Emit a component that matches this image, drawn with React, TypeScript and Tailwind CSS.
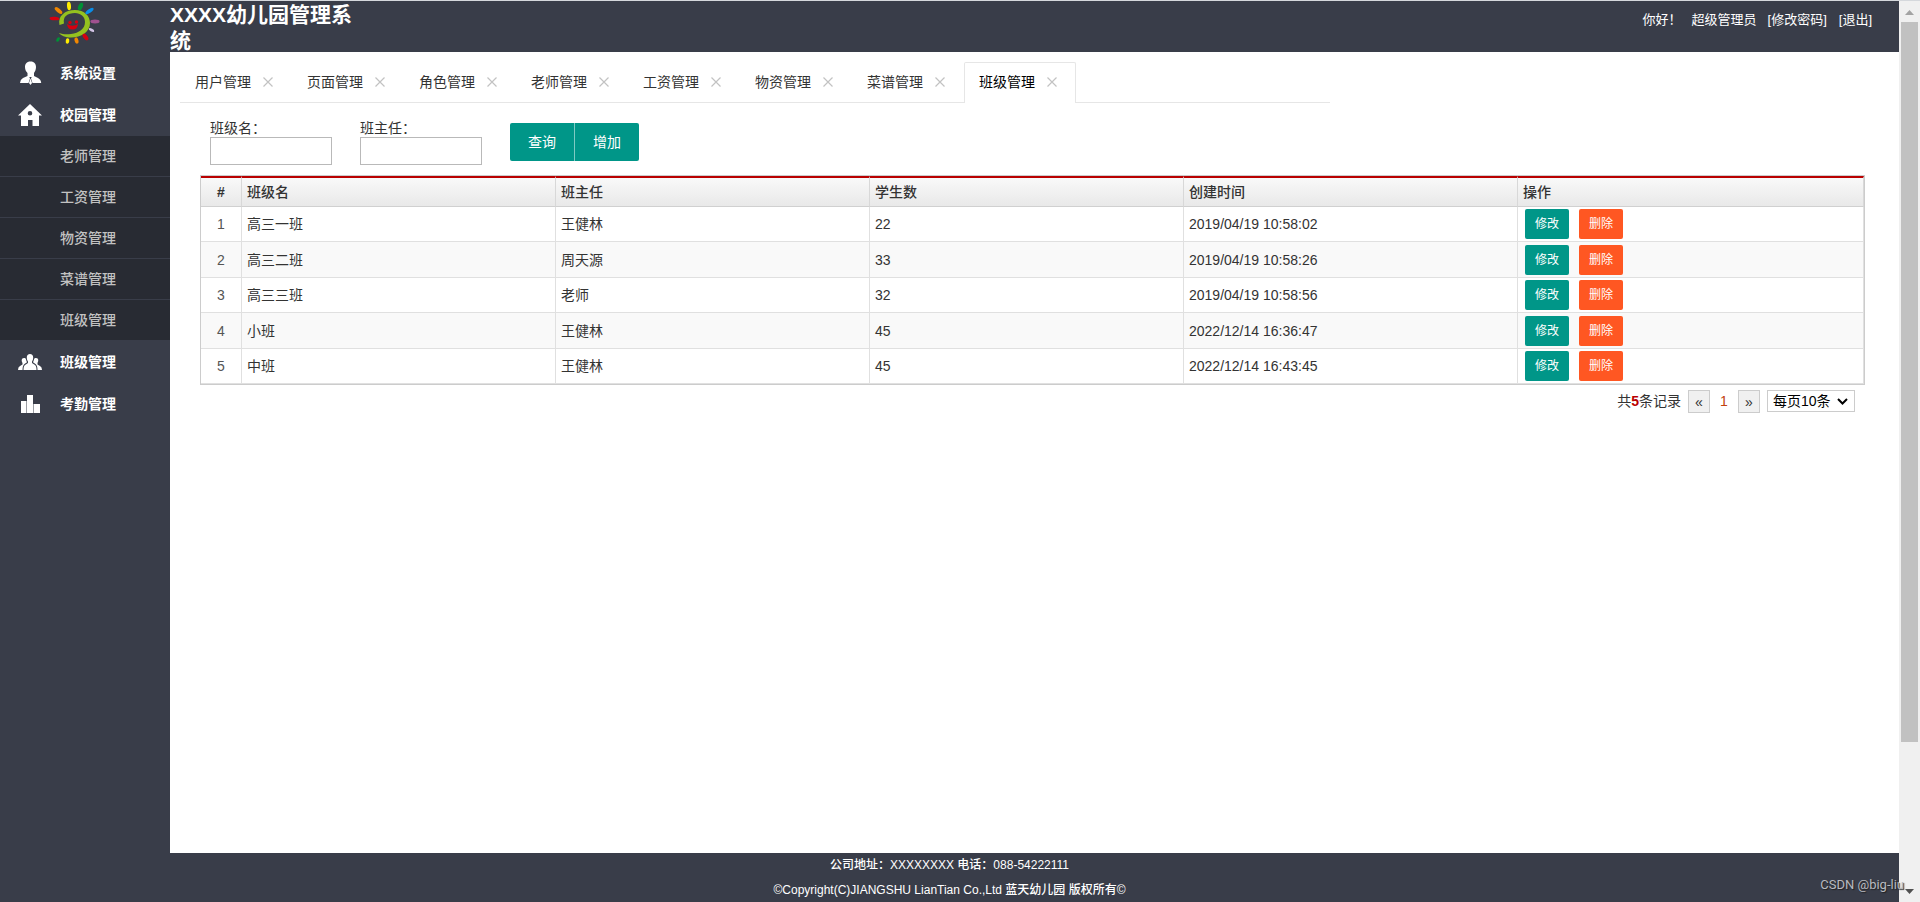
import React from "react";

const tabs = ["用户管理", "页面管理", "角色管理", "老师管理", "工资管理", "物资管理", "菜谱管理", "班级管理"];
const subMenu = ["老师管理", "工资管理", "物资管理", "菜谱管理", "班级管理"];
const rows = [
  ["高三一班", "王健林", "22", "2019/04/19 10:58:02"],
  ["高三二班", "周天源", "33", "2019/04/19 10:58:26"],
  ["高三三班", "老师", "32", "2019/04/19 10:58:56"],
  ["小班", "王健林", "45", "2022/12/14 16:36:47"],
  ["中班", "王健林", "45", "2022/12/14 16:43:45"],
];

function Logo() {
  return (
    <svg className="h-[44px] w-[52px]" viewBox="0 0 52 44" aria-hidden="true">
      <path d="M10.500 24C8.500 15 16 9 26 9C35.500 9 41 15 41 22C41 31 32 36.500 22 36.500C16 36.500 12 34.500 10 32C14 33.500 18 33.500 22 33C30 32 36 28 36 21C36 15.500 31.500 12 26 12C18.500 12 13.500 15.500 15 22.500Z" fill="#94c11f" />
      <ellipse cx="20" cy="5" rx="2" ry="4.200" fill="#ffec00" transform="rotate(-5 20 5)" />
      <ellipse cx="31.500" cy="5.500" rx="2.200" ry="4" fill="#009036" transform="rotate(24 31.500 5.500)" />
      <ellipse cx="40.500" cy="10" rx="1.900" ry="4.800" fill="#0a8de8" transform="rotate(55 40.500 10)" />
      <ellipse cx="9.500" cy="9.500" rx="2" ry="4.600" fill="#f18700" transform="rotate(-50 9.500 9.500)" />
      <ellipse cx="5.500" cy="17.500" rx="4.900" ry="1.800" fill="#d5000f" transform="rotate(4 5.500 17.500)" />
      <ellipse cx="46" cy="20.500" rx="4.600" ry="1.900" fill="#a0518f" />
      <ellipse cx="42.500" cy="29" rx="3" ry="1.400" fill="#d3c4e6" transform="rotate(28 42.500 29)" />
      <ellipse cx="36.500" cy="36" rx="2" ry="3.900" fill="#d5000f" transform="rotate(-38 36.500 36)" />
      <ellipse cx="27.500" cy="39.500" rx="1.900" ry="3.200" fill="#f18700" transform="rotate(-15 27.500 39.500)" />
      <ellipse cx="18.500" cy="40" rx="1.800" ry="2.700" fill="#ffec00" transform="rotate(8 18.500 40)" />
      <ellipse cx="9" cy="38.500" rx="1.500" ry="2.500" fill="#009036" transform="rotate(30 9 38.500)" />
      <circle cx="21" cy="21.500" r="1.700" fill="#d5000f" />
      <circle cx="27.500" cy="21" r="1.700" fill="#d5000f" />
      <path d="M18 23Q23.500 26.500 29 23Q28.500 28.500 23.500 28.500Q18.500 28.500 18 23Z" fill="#d5000f" />
    </svg>
  );
}

function PersonIcon() {
  return (
    <svg className="size-6" viewBox="0 0 24 24" fill="#fff" aria-hidden="true">
      <path d="M12.500 0.500C16.500 0.500 18 3 18 6C18 8.500 17 10.500 16 12V15L20 17Q23 18.500 23.200 22H14.500L13 17.500L13.700 16H11.300L12 17.500L10.500 22H2Q2.200 18.500 5 17L9.500 15V12C8 10.500 7 8.500 7 6C7 3 8.500 0.500 12.500 0.500Z" />
      <path d="M12.500 17.500L14 22L12.500 24L11 22Z" />
    </svg>
  );
}

function HomeIcon() {
  return (
    <svg className="size-6" viewBox="0 0 24 24" fill="#fff" aria-hidden="true">
      <path fillRule="evenodd" d="M12 1L24 12.500H21V23H14.500V17H10V23H3V12.500H0ZM12 8A2.300 2.300 0 1 0 12 12.600A2.300 2.300 0 1 0 12 8Z" />
    </svg>
  );
}

function GroupIcon() {
  return (
    <svg className="size-6" viewBox="0 0 24 24" fill="#fff" aria-hidden="true">
      <path d="M12 4C14 4 15.200 5.300 15.200 7.500C15.200 9.500 14.500 10.500 14 11.500V13L17 15Q18.500 16 18.500 20H5.500Q5.500 16 7 15L10 13V11.500C9.500 10.500 8.800 9.500 8.800 7.500C8.800 5.300 10 4 12 4Z" />
      <path d="M6 8C7 8 7.800 8.300 8 9.500C8.300 11 8.800 11.500 9 12.300L6.500 14Q4.500 15.500 4.500 20H0Q0 17 2 16L4.500 14.500V13C3.500 11.500 3 8 6 8ZM18 8C17 8 16.200 8.300 16 9.500C15.700 11 15.200 11.500 15 12.300L17.500 14Q19.500 15.500 19.500 20H24Q24 17 22 16L19.500 14.500V13C20.500 11.500 21 8 18 8Z" />
    </svg>
  );
}

function ChartIcon() {
  return (
    <svg className="size-6" viewBox="0 0 24 24" fill="#fff" aria-hidden="true">
      <path d="M3 9H8.500V21H3ZM9 3H15V21H9ZM15.500 12H22V21H15.500Z" />
    </svg>
  );
}

function MenuItem({ icon, label }: { icon: React.ReactNode; label: string }) {
  return (
    <a href="#" className="flex h-[42px] items-center gap-[18px] pl-[18px] text-sm font-bold text-white">
      {icon}
      {label}
    </a>
  );
}

export default function App() {
  return (
    <div className="flex min-h-screen bg-white font-['Liberation_Sans','Noto_Sans_CJK_SC',sans-serif] text-sm text-[#333]">
      <div className="flex min-w-0 flex-1 flex-col border-t border-[#d5d8dc]">
        <div className="flex flex-1">
          <nav className="flex w-[170px] shrink-0 flex-col bg-[#393d49]">
            <div className="flex h-[51px] justify-center pr-5">
              <Logo />
            </div>
            <MenuItem icon={<PersonIcon />} label="系统设置" />
            <MenuItem icon={<HomeIcon />} label="校园管理" />
            <div className="bg-[#282b33]">
              {subMenu.map((s) => (
                <a key={s} href="#" className="flex h-[41px] items-center border-b border-[#393d49] pb-px pl-[60px] text-sm font-medium text-[#c2c2c2]">
                  {s}
                </a>
              ))}
            </div>
            <MenuItem icon={<GroupIcon />} label="班级管理" />
            <MenuItem icon={<ChartIcon />} label="考勤管理" />
          </nav>
          <div className="flex min-w-0 flex-1 flex-col">
            <header className="flex h-[51px] items-start justify-between bg-[#393d49] pr-[26px] text-white">
              <h1 className="w-[190px] pt-px text-[21px] leading-[26px] font-bold">XXXX幼儿园管理系统</h1>
              <div className="flex gap-[10px] pt-[9px] text-[13px] leading-5">
                <span>你好！</span>
                <span>超级管理员</span>
                <a href="#" className="px-px">[修改密码]</a>
                <a href="#" className="px-px">[退出]</a>
              </div>
            </header>
            <main className="flex flex-col pt-[10px]">
              <div role="tablist" className="ml-[10px] flex h-[41px] w-[1150px] max-w-full border-b border-[#e6e6e6]">
                {tabs.map((t, i) => (
                  <div
                    key={t}
                    className={
                      i === tabs.length - 1
                        ? "-mb-px flex w-28 items-center gap-2 rounded-t-xs border border-b-0 border-[#e6e6e6] bg-white pb-[2px] pl-[14px] text-black"
                        : "flex w-28 items-center gap-2 pl-[15px]"
                    }
                  >
                    <button type="button" role="tab" aria-selected={i === tabs.length - 1}>
                      {t}
                    </button>
                    <button type="button" aria-label={"关闭" + t} className="flex size-[18px] items-center justify-center">
                      <svg className="size-[10px]" viewBox="0 0 10 10" stroke="#c2c2c2" strokeWidth="1.200" aria-hidden="true">
                        <path d="M.5 .5L9.500 9.500M9.500 .5L.5 9.500" />
                      </svg>
                    </button>
                  </div>
                ))}
              </div>
              <form className="flex gap-7 pt-4 pl-10" onSubmit={(e) => e.preventDefault()}>
                <label className="flex w-[122px] flex-col leading-[18px]">
                  班级名：
                  <input className="h-7 border border-[#b9b9b9] px-1" />
                </label>
                <label className="flex w-[122px] flex-col leading-[18px]">
                  班主任：
                  <input className="h-7 border border-[#b9b9b9] px-1" />
                </label>
                <div className="mt-1 flex h-[38px] divide-x divide-[#7fcac3] overflow-hidden rounded-xs bg-[#009688] text-white">
                  <button type="submit" className="w-[65px]">查询</button>
                  <button type="button" className="w-16">增加</button>
                </div>
              </form>
              <div className="mt-[10px] mr-[34px] ml-[30px] border border-[#ccc]">
                <table className="w-full table-fixed border-separate border-spacing-0 text-left">
                  <colgroup>
                    <col className="w-[41px]" />
                    <col className="w-[314px]" />
                    <col className="w-[314px]" />
                    <col className="w-[314px]" />
                    <col className="w-[334px]" />
                    <col />
                  </colgroup>
                  <thead>
                    <tr className="h-[31px] bg-linear-to-b from-[#fafafa] to-[#e8e8e8]">
                      {["#", "班级名", "班主任", "学生数", "创建时间", "操作"].map((h) => (
                        <th
                          key={h}
                          scope="col"
                          className="border-t-2 border-r border-b border-t-[#b90000] border-r-[#d8d8d8] border-b-[#d0d0d0] px-[5px] py-0 font-medium first:text-center first:font-bold"
                        >
                          {h}
                        </th>
                      ))}
                    </tr>
                  </thead>
                  <tbody>
                    {rows.map((r, i) => (
                      <tr key={r[0]} className="h-[35px] even:h-9 even:bg-[#f9f9f9]">
                        <td className="border-r border-b border-[#e0e0e0] p-0 text-center text-[#555]">{i + 1}</td>
                        {r.map((c, j) => (
                          <td key={j} className="border-r border-b border-[#e0e0e0] px-[5px] py-0">{c}</td>
                        ))}
                        <td className="border-r border-b border-[#e0e0e0] px-[7px] py-0">
                          <div className="flex gap-[10px] text-xs text-white">
                            <button type="button" className="h-[30px] w-11 rounded-xs bg-[#009688]">修改</button>
                            <button type="button" className="h-[30px] w-11 rounded-xs bg-[#ff5722]">删除</button>
                          </div>
                        </td>
                      </tr>
                    ))}
                  </tbody>
                </table>
              </div>
              <div className="flex items-start justify-end gap-[7px] pt-[5px] pr-11 leading-[22px]">
                <span>
                  共<b className="text-[#b90000]">5</b>条记录
                </span>
                <button type="button" aria-label="上一页" className="h-[23px] w-[22px] border border-[#ccc] bg-[#f0f0f0] leading-5">«</button>
                <span className="w-[14px] text-center text-[#c2410c]">1</span>
                <button type="button" aria-label="下一页" className="h-[23px] w-[22px] border border-[#ccc] bg-[#f0f0f0] leading-5">»</button>
                <div className="relative">
                  <select aria-label="每页条数" className="block h-[22px] w-[88px] appearance-none border border-[#ccc] bg-white pl-[5px] leading-5 text-black">
                    <option>每页10条</option>
                  </select>
                  <svg className="pointer-events-none absolute top-2 right-[7px] h-[7px] w-[11px]" viewBox="0 0 11 7" fill="none" stroke="#000" strokeWidth="2" aria-hidden="true">
                    <path d="M1 1L5.500 5.500L10 1" />
                  </svg>
                </div>
              </div>
            </main>
          </div>
        </div>
        <footer className="flex h-[49px] flex-col items-center bg-[#393d49] text-xs leading-[25px] font-medium text-white">
          <p>公司地址：XXXXXXXX 电话：088-54222111</p>
          <p>©Copyright(C)JIANGSHU LianTian Co.,Ltd 蓝天幼儿园 版权所有©</p>
        </footer>
      </div>
      <div className="flex w-[21px] shrink-0 flex-col items-center border-t border-[#d5d8dc] bg-[#f0f0f0]" aria-hidden="true">
        <svg className="h-[21px] w-[17px] shrink-0" viewBox="0 0 17 21" fill="#a3a3a3">
          <path d="M4 14L8.500 9L13 14Z" />
        </svg>
        <div className="h-[720px] w-[17px] bg-[#c1c1c1]" />
        <svg className="mt-auto h-[21px] w-[17px] shrink-0" viewBox="0 0 17 21" fill="#505050">
          <path d="M4 8L8.500 13L13 8Z" />
        </svg>
      </div>
      <div className="absolute right-4 bottom-[7px] font-[Roboto,sans-serif] text-[13px] text-[#b8babf] [text-shadow:1px_1px_1px_#222]">CSDN @big-liu</div>
    </div>
  );
}
